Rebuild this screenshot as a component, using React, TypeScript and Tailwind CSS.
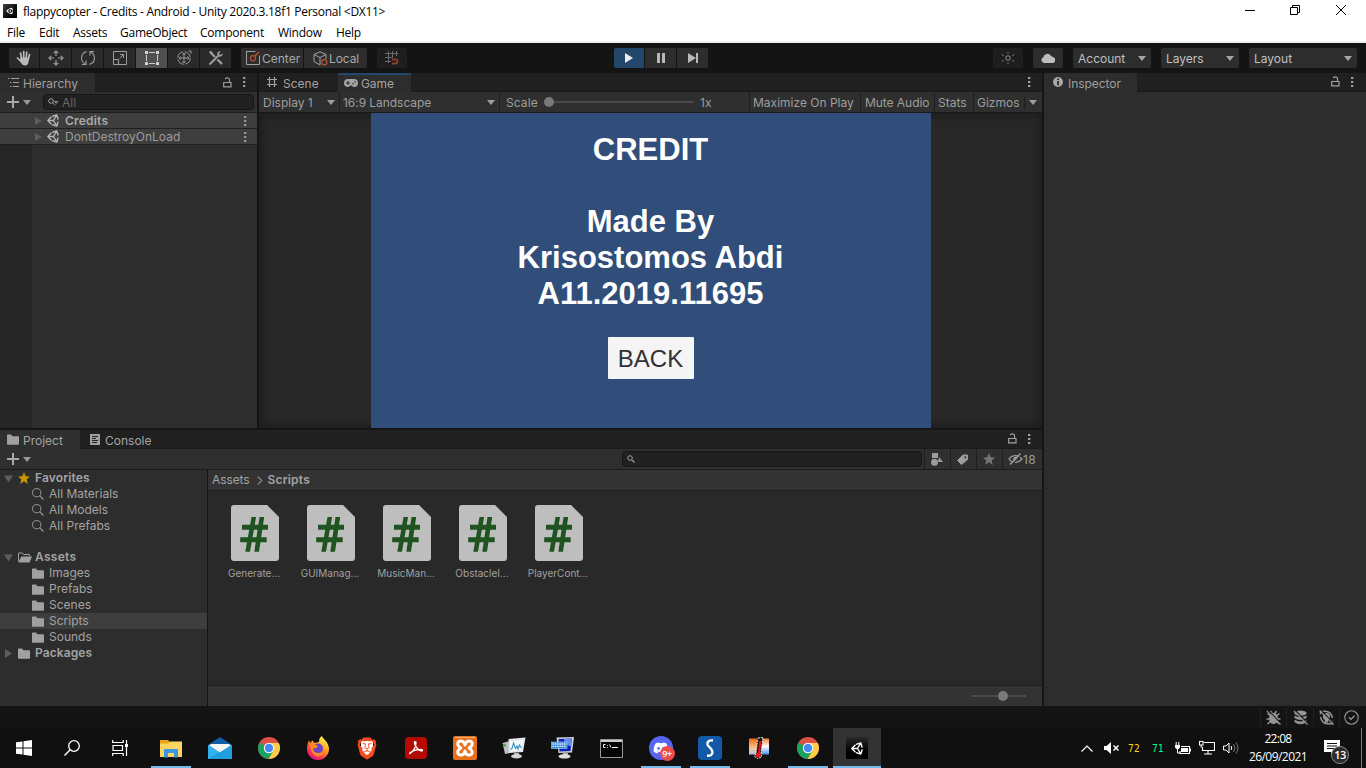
import React from "react";
import { FaUnity, FaDiscord } from "react-icons/fa";
import { SiBrave } from "react-icons/si";

type IconProps = { w: number; h: number; className?: string; children: React.ReactNode };

function Icon({ w, h, className = "", children }: IconProps) {
  return (
    <svg width={w} height={h} viewBox={`0 0 ${w} ${h}`} className={`shrink-0 ${className}`} fill="none">
      {children}
    </svg>
  );
}

function Caret({ className = "" }: { className?: string }) {
  return (
    <Icon w={8} h={5} className={className}>
      <path d="M0 0H8L4 5Z" fill="currentColor" />
    </Icon>
  );
}

function Dots({ className = "" }: { className?: string }) {
  return (
    <Icon w={3} h={12} className={className}>
      <path d="M0 1h2.300v2H0zM0 5h2.300v2H0zM0 9h2.300v2H0z" fill="currentColor" />
    </Icon>
  );
}

function Lock({ className = "" }: { className?: string }) {
  return (
    <Icon w={9} h={11} className={className}>
      <path d="M.7 5.500h7.300v4.300H.7zM6.500 5V2.600C6.500.4 2.600.3 2.200 2.200" stroke="currentColor" strokeWidth="1.200" />
    </Icon>
  );
}

function Folder({ className = "" }: { className?: string }) {
  return (
    <Icon w={12} h={11} className={className}>
      <path d="M0 1.200Q0 .5.8.5H4L5.500 2.300h5.700q.8 0 .8.8V10q0 .8-.8.8H.8Q0 10.800 0 10Z" fill="currentColor" />
    </Icon>
  );
}

function SceneLogo({ className = "" }: { className?: string }) {
  return (
    <Icon w={12} h={13} className={className}>
      <path d="M4.500 2.700.8 6.500l3.700 3.800M.8 6.500h5.700M6.500 6.500 9.800 1 5 2.400M6.500 6.500 9.800 12 5 10.600M9.800 1l1.400 4.500M9.800 12l1.400-4.500" stroke="currentColor" strokeWidth="1.400" strokeLinejoin="round" />
    </Icon>
  );
}

function Plus() {
  return (
    <Icon w={12} h={12} className="text-[#a8a8a8]">
      <path d="M6 0v12M0 6h12" stroke="currentColor" strokeWidth="2" />
    </Icon>
  );
}

const toolIcons = [
  <Icon w={16} h={16} className="text-[#b8b8b8]">
    <path d="M5.500 8.500 4.500 3M7.700 8V1.500M10.200 8l.5-6M12.300 9l1.200-4.500M5 11.500 1.500 8" stroke="currentColor" strokeWidth="1.700" strokeLinecap="round" />
    <path d="M4.600 7.500h8.600L12.500 12q-.7 3.500-3.500 3.500-2.500 0-3.500-2L3.500 10.500Z" fill="currentColor" />
  </Icon>,
  <Icon w={16} h={16}>
    <path d="M8 1v5M8 10v5M1 8h5M10 8h5M5.800 3.200 8 1l2.200 2.200M5.800 12.800 8 15l2.200-2.200M3.200 5.800 1 8l2.200 2.200M12.800 5.800 15 8l-2.200 2.200" stroke="currentColor" strokeWidth="1.200" />
  </Icon>,
  <Icon w={16} h={16}>
    <path d="M6.500 1.600C0 3.500.2 11.500 5.500 14.300M2 14.500h4v-4M9.500 14.400C16 12.500 15.800 4.500 10.500 1.700M14 1.500h-4v4" stroke="currentColor" strokeWidth="1.100" />
  </Icon>,
  <Icon w={16} h={16}>
    <path d="M1.500 1.500h13v13h-13zM1.500 9.500h5v5M7.500 8.500l4-4M8 4.500h3.500V8" stroke="currentColor" />
  </Icon>,
  <Icon w={16} h={16} className="text-[#d0d0d0]">
    <path d="M5 2.500h6M5 13.500h6M2.500 5v6M13.500 5v6" stroke="currentColor" />
    <path d="M1 1h3v3H1zM12 1h3v3h-3zM1 12h3v3H1zM12 12h3v3h-3z" fill="currentColor" />
  </Icon>,
  <Icon w={16} h={16}>
    <circle cx="8" cy="8" r="6.200" stroke="currentColor" strokeDasharray="8 1.700" />
    <path d="M8 3v10M3 8h10M6.500 4.700 8 3l1.500 1.700M6.500 11.300 8 13l1.500-1.700M4.700 6.500 3 8l1.700 1.500M11.300 6.500 13 8l-1.700 1.500M12.500 1H15v2.500" stroke="currentColor" />
  </Icon>,
  <Icon w={16} h={16}>
    <path d="m2 2 5 5M9.500 9.500l4.500 4.500" stroke="currentColor" strokeWidth="2.400" />
    <path d="M1.500 14.500 10.300 5.700" stroke="currentColor" strokeWidth="2" />
    <path d="M14.700 3.200 12.500 5 11 3.500l1.700-2.200C10 .7 8.600 3 9.400 5.200l1.400 1.500c2.300.6 4.400-1.200 3.900-3.500ZM1 1l3 .5L5 4 3.500 5Z" fill="currentColor" />
  </Icon>,
];

function DropButton({ label, className }: { label: string; className: string }) {
  return (
    <div className={`flex h-5 items-center justify-between rounded-[2px] bg-[#2d2d2d] pr-[5px] pl-[5px] text-[12px] text-[#c0c0c0] ${className}`}>
      <span className="pt-px">{label}</span>
      <Caret className="text-[#a6a6a6]" />
    </div>
  );
}

function MainToolbar() {
  return (
    <div className="flex h-[30px] items-center bg-[#141414] pl-[9px] text-[#9c9c9c]">
      <div className="flex gap-px">
        {toolIcons.map((icon, i) => (
          <div
            key={i}
            className={`flex h-5 items-center justify-center ${i === 4 ? "bg-[#505050]" : "bg-[#2a2a2a]"} ${i === 0 ? "w-[30px] rounded-l-[2px]" : "w-[31px]"}`}
          >
            {icon}
          </div>
        ))}
      </div>
      <div className="ml-[10px] flex gap-px text-[12px] text-[#a8a8a8]">
        <div className="flex h-5 w-[62px] items-center gap-[2px] rounded-l-[2px] bg-[#2d2d2d] pl-[5px]">
          <Icon w={14} h={14}>
            <path d="M5 .5H.5v13h13V9M.5 5V.5h9M13.500 10V4.500" stroke="#a0a0a0" />
            <circle cx="7" cy="7.300" r="2.600" stroke="#c1502e" strokeWidth="1.200" />
            <path d="m9 5 4-4" stroke="#c1502e" strokeWidth="1.200" />
          </Icon>
          <span className="pt-px">Center</span>
        </div>
        <div className="flex h-5 w-[63px] items-center gap-[1px] rounded-r-[2px] bg-[#2d2d2d] pl-[9px]">
          <Icon w={15} h={15}>
            <path d="M7 .8 13 3.500V8M7 .8 1 3.500v7L7 14M1 3.500l6 3 6-3M7 6.500V14" stroke="#a0a0a0" />
            <circle cx="11.300" cy="11.300" r="2.600" fill="#2d2d2d" stroke="#c1502e" strokeWidth="1.200" />
          </Icon>
          <span className="pt-px tracking-[-0.1px]">Local</span>
        </div>
      </div>
      <div className="ml-[10px] flex h-5 w-[30px] items-center justify-center rounded-[2px] bg-[#1e1e1e]">
        <Icon w={14} h={14}>
          <path d="M3.500 0v12M7.500 0v7M11.500 0v5M0 2.500h13M0 6.500h8M0 10.500h6" stroke="#6a6a6a" />
          <path d="M7 8.500h3.500a2 2 0 0 1 0 4H7" stroke="#8a4028" strokeWidth="1.800" />
        </Icon>
      </div>
      <div className="ml-[207px] flex gap-px">
        <div className="flex h-5 w-[30px] items-center justify-center rounded-l-[2px] bg-[#23466b]">
          <Icon w={8} h={10}><path d="M0 0 8 5 0 10Z" fill="#ececec" /></Icon>
        </div>
        <div className="flex h-5 w-[31px] items-center justify-center bg-[#2d2d2d]">
          <Icon w={8} h={10}><path d="M0 0h3v10H0zM5 0h3v10H5z" fill="#b8b8b8" /></Icon>
        </div>
        <div className="flex h-5 w-[31px] items-center justify-center rounded-r-[2px] bg-[#2d2d2d]">
          <Icon w={10} h={10}><path d="M0 0 8 5 0 10ZM8 0h2v10H8z" fill="#b8b8b8" /></Icon>
        </div>
      </div>
      <div className="ml-[285px] flex gap-[10px]">
        <div className="flex h-5 w-[30px] items-center justify-center rounded-[2px] bg-[#1e1e1e]">
          <Icon w={12} h={12}>
            <circle cx="6" cy="6" r="2.200" stroke="#707070" strokeWidth="1.200" />
            <path d="M5.300 0h1.400v1.500H5.300zM5.300 10.500h1.400V12H5.300zM0 2.500h1.500V4H0zM10.500 2.500H12V4h-1.500zM0 8h1.500v1.500H0zM10.500 8H12v1.500h-1.500z" fill="#707070" />
          </Icon>
        </div>
        <div className="flex h-5 w-[30px] items-center justify-center rounded-[2px] bg-[#2d2d2d]">
          <Icon w={14} h={10}>
            <path d="M3 10a3 3 0 0 1-.6-5.800A4 4 0 0 1 9.800 2.800 3.600 3.600 0 0 1 11.500 4 3 3 0 0 1 11 10Z" fill="#bdbdbd" />
          </Icon>
        </div>
        <DropButton label="Account" className="w-[78px]" />
        <DropButton label="Layers" className="w-[78px]" />
        <DropButton label="Layout" className="w-[108px]" />
      </div>
    </div>
  );
}

function SceneRow({ name, bold }: { name: string; bold?: boolean }) {
  return (
    <div className="flex h-4 items-center border-b border-[#1f1f1f] bg-[#3e3e3e] pl-[35px]">
      <Icon w={7} h={8}><path d="M0 0 7 4 0 8Z" fill="#5c5c5c" /></Icon>
      <SceneLogo className="ml-[5px] text-[#b5b5b5]" />
      <span className={`ml-[6px] flex-1 text-[12px] leading-4 ${bold ? "font-semibold tracking-[0.2px] text-[#a8a8a8]" : "text-[#9c9c9c]"}`}>{name}</span>
      <Dots className="mr-[10px] text-[#999]" />
    </div>
  );
}

function Hierarchy() {
  return (
    <div className="flex w-[257px] flex-col bg-[#2d2d2d]">
      <div className="flex h-[19px] items-center justify-between border-b border-[#1a1a1a] bg-[#202020]">
        <div className="flex h-[19px] w-[95px] items-center rounded-tr-[2px] bg-[#2d2d2d] pl-[8px] text-[12px] text-[#9f9f9f]">
          <Icon w={11} h={9}>
            <path d="M0 .5h1.500M3 .5h8M2 4.500h1.500M5 4.500h6M2 8.500h1.500M5 8.500h6" stroke="currentColor" />
          </Icon>
          <span className="ml-[4px] pt-[3px]">Hierarchy</span>
        </div>
        <div className="flex items-center gap-[11px] pr-[11px] text-[#9c9c9c]">
          <Lock /><Dots />
        </div>
      </div>
      <div className="flex h-[21px] items-center border-b border-[#1c1c1c] bg-[#2f2f2f] pl-[7px]">
        <Plus />
        <Caret className="ml-[4px] text-[#999]" />
        <div className="ml-[12px] flex h-4 w-[211px] items-center rounded-[4px] border border-[#161616] bg-[#212121] pl-[4px]">
          <Icon w={10} h={8}>
            <circle cx="3" cy="3" r="2.300" stroke="#a0a0a0" />
            <path d="m4.800 4.800 2.500 2.500M6.500 3.500h3.500L8.300 5.500Z" stroke="#a0a0a0" strokeWidth=".9" />
          </Icon>
          <span className="ml-[4px] pt-px text-[12px] leading-none text-[#666]">All</span>
        </div>
      </div>
      <SceneRow name="Credits" bold />
      <SceneRow name="DontDestroyOnLoad" />
      <div className="w-8 flex-1 bg-[#262626]" />
    </div>
  );
}

function GameView() {
  return (
    <div className="ml-[2px] flex w-[783px] flex-col">
      <div className="flex h-[19px] items-center border-b border-[#1a1a1a] bg-[#202020] text-[12px] text-[#a3a3a3]">
        <div className="flex h-full w-[79px] items-center pl-[8px]">
          <Icon w={10} h={10}><path d="M2.500 0v10M7.500 0v10M0 2.500h10M0 7.500h10" stroke="currentColor" strokeWidth="1.200" /></Icon>
          <span className="ml-[6px] pt-[3px]">Scene</span>
        </div>
        <div className="flex h-[19px] w-[73px] items-center border-t-2 border-[#23466b] bg-[#2d2d2d] pl-[6px]">
          <Icon w={14} h={8}>
            <path d="M4 0h6a4 4 0 0 1 0 8C8.500 8 8.500 6.500 7 6.500S5.500 8 4 8A4 4 0 0 1 4 0Z" fill="currentColor" />
            <path d="M4 2v4M2 4h4" stroke="#2d2d2d" />
            <circle cx="9" cy="4.800" r=".8" fill="#2d2d2d" /><circle cx="11" cy="3" r=".8" fill="#2d2d2d" />
          </Icon>
          <span className="ml-[3px] pt-px tracking-[-0.1px]">Game</span>
        </div>
        <Dots className="mr-[11px] ml-auto" />
      </div>
      <div className="flex h-[21px] items-stretch border-b border-[#191919] bg-[#2f2f2f] pt-px text-[12px] leading-5 whitespace-nowrap text-[#9e9e9e]">
        <div className="-mt-px flex w-[81px] items-center justify-between border-r border-[#1e1e1e] pr-[4px] pl-[4px]"><span className="pt-px">Display 1</span><Caret /></div>
        <div className="-mt-px flex w-[160px] items-center justify-between border-r border-[#1e1e1e] pr-[4px] pl-[3px]"><span className="pt-px tracking-[-0.05px]">16:9 Landscape</span><Caret /></div>
        <div className="-mt-px flex w-[250px] items-center border-r border-[#1e1e1e] pl-[6px]">
          <span className="w-[38px] pt-px tracking-[0.1px]">Scale</span>
          <span className="size-[10px] rounded-full bg-[#7a7a7a]" />
          <span className="h-[2px] w-[140px] bg-[#4a4a4a]" />
          <span className="ml-[6px] pt-px">1x</span>
        </div>
        <div className="w-[111px] border-r border-[#1e1e1e] pl-[3px]">Maximize On Play</div>
        <div className="w-[74px] border-r border-[#1e1e1e] pl-[4px] tracking-[-0.05px]">Mute Audio</div>
        <div className="w-[39px] border-r border-[#1e1e1e] pl-[3px]">Stats</div>
        <div className="flex flex-1 items-center pl-[3px]">
          <span className="w-[47px]">Gizmos</span>
          <span className="h-3 w-px bg-[#1e1e1e]" />
          <Caret className="ml-[4px]" />
        </div>
      </div>
      <div className="flex flex-1 bg-[#282828] pl-[112px] shadow-[inset_0_0_9px_3px_#1d1d1d]">
        <div className="flex w-[560px] flex-col items-center bg-[#314d79] pt-[19px] font-['Liberation_Sans',sans-serif]">
          <div className="pr-px text-center text-[31px] leading-9 font-bold text-white">
            CREDIT<br /><br />Made By<br />Krisostomos Abdi<br />A11.2019.11695
          </div>
          <div className="mt-[25px] flex h-[42px] w-[86px] items-center justify-center rounded-[1px] bg-[#f5f5f5] pt-[2px] pr-px text-[24px] text-[#323232]">BACK</div>
        </div>
      </div>
    </div>
  );
}

function TreeLabel({ children, className = "" }: { children: React.ReactNode; className?: string }) {
  return <span className={`text-[12px] leading-4 text-[#a3a3a3] ${className}`}>{children}</span>;
}

function Fold({ open }: { open?: boolean }) {
  return (
    <Icon w={9} h={9}>
      <path d={open ? "M0 1.500H9L4.500 8.500Z" : "M1 0 8 4.500 1 9Z"} fill="#5c5c5c" />
    </Icon>
  );
}

function ProjectTree() {
  return (
    <div className="flex w-[207px] flex-col bg-[#2d2d2d]">
      <div className="flex h-4 items-center pl-[4px]">
        <Fold open />
        <Icon w={12} h={12} className="ml-[5px]"><path d="m6 0 1.700 4.200 4.300.3-3.300 2.900L9.800 12 6 9.300 2.200 12l1.100-4.600L0 4.500l4.300-.3Z" fill="#c99700" /></Icon>
        <TreeLabel className="ml-[5px] font-semibold tracking-[0.15px]">Favorites</TreeLabel>
      </div>
      {["All Materials", "All Models", "All Prefabs"].map((n) => (
        <div key={n} className="flex h-4 items-center pl-[32px]">
          <Icon w={12} h={12}>
            <circle cx="4.700" cy="4.700" r="4.100" stroke="#9a9a9a" /><path d="m7.800 7.800 3.700 3.700" stroke="#9a9a9a" strokeWidth="1.200" />
          </Icon>
          <TreeLabel className="ml-[5px]">{n}</TreeLabel>
        </div>
      ))}
      <div className="mt-[15px] flex h-4 items-center pl-[4px]">
        <Fold open />
        <Icon w={14} h={11} className="ml-[5px] text-[#a0a0a0]">
          <path d="M.5 9.500V1h4l1 1.500h6V4" stroke="currentColor" />
          <path d="M.5 10.500 3.200 4.500H14L11.500 10.500Z" fill="currentColor" />
        </Icon>
        <TreeLabel className="ml-[3px] font-semibold tracking-[0.3px]">Assets</TreeLabel>
      </div>
      {["Images", "Prefabs", "Scenes", "Scripts", "Sounds"].map((n) => (
        <div key={n} className={`flex h-4 items-center pl-[32px] ${n === "Scripts" ? "bg-[#3e3e3e]" : ""}`}>
          <Folder className="text-[#a0a0a0]" />
          <TreeLabel className="ml-[5px]">{n}</TreeLabel>
        </div>
      ))}
      <div className="flex h-4 items-center pl-[4px]">
        <Fold />
        <Folder className="ml-[5px] text-[#a0a0a0]" />
        <TreeLabel className="ml-[5px] font-semibold tracking-[0.1px]">Packages</TreeLabel>
      </div>
    </div>
  );
}

function ScriptFile({ name }: { name: string }) {
  return (
    <div className="flex w-[76px] flex-col items-center">
      <Icon w={48} h={56}>
        <path d="M3 0H36L48 12V53q0 3-3 3H3q-3 0-3-3V3Q0 0 3 0Z" fill="#bebebe" />
        <path d="M20.500 12h4.600L19 46.700h-4.700ZM28.500 12h4.700L28 46.700h-4.700ZM11 19.800h26v5H11ZM9.200 32.200h26.500v5H9.200Z" fill="#1f5420" />
      </Icon>
      <span className="mt-[6px] pr-[2px] text-[10px] leading-[13px] text-[#a0a0a0]">{name}</span>
    </div>
  );
}

function Project() {
  return (
    <div className="mt-[2px] flex h-[276px] w-[1042px] flex-col">
      <div className="flex h-[19px] items-center border-b border-[#1c1c1c] bg-[#202020] text-[12px] text-[#a3a3a3]">
        <div className="flex h-[19px] w-[80px] items-center rounded-tr-[2px] bg-[#2f2f2f] pl-[7px]">
          <Folder className="text-[#a0a0a0]" />
          <span className="ml-[4px] pt-[3px]">Project</span>
        </div>
        <div className="flex items-center pl-[10px]">
          <Icon w={10} h={11}>
            <path d="M0 0h10v11H0Z" fill="#a0a0a0" /><path d="M2 2.500h6M2 4.500h4M2 6.500h6M2 8.500h5" stroke="#202020" />
          </Icon>
          <span className="ml-[5px] pt-[3px]">Console</span>
        </div>
        <div className="ml-auto flex gap-[11px] pr-[11px]"><Lock /><Dots /></div>
      </div>
      <div className="flex h-[21px] items-center border-b border-[#1c1c1c] bg-[#2f2f2f] pl-[7px] text-[#9c9c9c]">
        <Plus />
        <Caret className="ml-[4px] text-[#999]" />
        <div className="ml-auto flex h-4 w-[300px] items-center rounded-[4px] border border-[#161616] bg-[#212121] pl-[4px]">
          <Icon w={8} h={8}><circle cx="3" cy="3" r="2.300" stroke="#a0a0a0" /><path d="m4.800 4.800 2.700 2.700" stroke="#a0a0a0" strokeWidth="1.200" /></Icon>
        </div>
        <div className="ml-[2px] flex h-5 w-[26px] items-center justify-center border-l border-[#1e1e1e] pr-[2px]">
          <Icon w={13} h={13}><path d="M2 0h6v5H2ZM9 4l4 5H8Z" fill="currentColor" /><circle cx="4.500" cy="9.300" r="3.500" fill="currentColor" /></Icon>
        </div>
        <div className="flex h-5 w-[26px] items-center justify-center border-l border-[#1e1e1e] pr-[3px]">
          <Icon w={11} h={11}><path d="M6 1h4.500v4.500L4.500 10.500 .5 6.500Z" fill="currentColor" stroke="currentColor" strokeLinejoin="round" /><circle cx="8.300" cy="3.300" r="1" fill="#2f2f2f" /></Icon>
        </div>
        <div className="flex h-5 w-[26px] items-center justify-center border-l border-[#1e1e1e] pr-px">
          <Icon w={12} h={12}><path d="m6 0 1.700 4.200 4.300.3-3.300 2.900L9.800 12 6 9.300 2.200 12l1.100-4.600L0 4.500l4.300-.3Z" fill="#747474" /></Icon>
        </div>
        <div className="flex h-5 w-[40px] items-center border-l border-[#1e1e1e] pl-[5px]">
          <Icon w={15} h={12}>
            <path d="M1 6C4 1.500 10.500 1.500 14 6 10.500 10.500 4 10.500 1 6Z" stroke="currentColor" strokeWidth="1.300" />
            <circle cx="7.500" cy="6" r="2.300" fill="currentColor" /><path d="m3.200 12.500 10.500-11" stroke="#2f2f2f" strokeWidth="1.300" /><path d="M2 11.500 12.500.5" stroke="currentColor" strokeWidth="1.400" />
          </Icon>
          <span className="pt-px text-[12px] tracking-[0.3px]">18</span>
        </div>
      </div>
      <div className="flex flex-1">
        <ProjectTree />
        <div className="ml-px flex flex-1 flex-col bg-[#292929]">
          <div className="flex h-[21px] items-center border-b border-[#1f1f1f] bg-[#333] pl-[4px]">
            <TreeLabel className="tracking-[-0.1px] text-[#909090]">Assets</TreeLabel>
            <Icon w={6} h={9} className="ml-[7px]"><path d="m.7.5 4 4-4 4" stroke="#808080" strokeWidth="1.300" /></Icon>
            <TreeLabel className="ml-[5px] font-semibold tracking-[0.2px]">Scripts</TreeLabel>
          </div>
          <div className="flex flex-1 pt-[14px] pl-[9px]">
            {["Generate...", "GUIManag...", "MusicMan...", "ObstacleI...", "PlayerCont..."].map((n) => <ScriptFile key={n} name={n} />)}
          </div>
          <div className="flex h-[21px] items-center justify-end border-t border-[#1f1f1f] bg-[#333] pr-[16px]">
            <span className="h-[2px] w-[27px] bg-[#4a4a4a]" /><span className="size-[10px] rounded-full bg-[#7a7a7a]" /><span className="h-[2px] w-[18px] bg-[#4a4a4a]" />
          </div>
        </div>
      </div>
    </div>
  );
}

function Inspector() {
  return (
    <div className="ml-[2px] flex flex-1 flex-col bg-[#2d2d2d]">
      <div className="flex h-[19px] items-center border-b border-[#1a1a1a] bg-[#202020] text-[12px] text-[#9f9f9f]">
        <div className="flex h-[19px] w-[93px] items-center rounded-t-[2px] bg-[#2d2d2d] pl-[9px]">
          <Icon w={10} h={10}><circle cx="5" cy="5" r="5" fill="#a8a8a8" /><path d="M4.200 1.500h1.700v1.500H4.200ZM4.200 4h1.700v4.300H4.200Z" fill="#222" /></Icon>
          <span className="ml-[5px] pt-[3px] tracking-[-0.05px]">Inspector</span>
        </div>
        <div className="ml-auto flex gap-[11px] pr-[12px]"><Lock /><Dots /></div>
      </div>
    </div>
  );
}

function Slash() {
  return (
    <>
      <path d="m2 0 13 13.500" stroke="#141414" strokeWidth="1.100" />
      <path d="m.8.8 13.700 13.700" stroke="currentColor" strokeWidth="1.200" />
    </>
  );
}

function StatusBar() {
  return (
    <div className="flex h-[22px] items-center justify-end bg-[#141414] pr-[7px] text-[#959595]">
      <div className="flex h-5 w-[26px] items-center justify-center border-l border-[#202020]">
        <Icon w={15} h={15}>
          <ellipse cx="7.500" cy="8.500" rx="4.500" ry="5.500" fill="currentColor" />
          <path d="M4.500 1 6.500 4M10.500 1 8.500 4M1.500 3.500l4 3M13.500 3.500l-4 3M.5 9H14.500M1.500 14 5 11M13.500 14 10 11" stroke="currentColor" strokeWidth="1.500" />
          <Slash />
        </Icon>
      </div>
      <div className="flex h-5 w-[27px] items-center justify-center border-l border-[#202020]">
        <Icon w={15} h={15}>
          <ellipse cx="7.500" cy="3.200" rx="6" ry="2.700" fill="currentColor" />
          <path d="M1.500 5.500q6 3.500 12 0v2.500q-6 4-12 0ZM1.500 9.800q6 3.500 12 0v2.500q-6 4-12 0Z" fill="currentColor" />
          <Slash />
        </Icon>
      </div>
      <div className="flex h-5 w-[26px] items-center justify-center border-l border-[#202020]">
        <Icon w={15} h={15}>
          <circle cx="7.500" cy="6.500" r="3.600" fill="currentColor" /><path d="M5.800 9h3.400v3.500H5.800Z" fill="currentColor" />
          <path d="M4.500 1.300Q12 .5 13.500 8M10.500 13.700Q3 14.500 1.500 7M10 13.700h3.500v-3M5 1.300H1.500v3" stroke="currentColor" strokeWidth="1.400" />
          <Slash />
        </Icon>
      </div>
      <div className="flex h-5 w-[20px] items-center justify-end border-l border-[#202020]">
        <Icon w={15} h={15}><circle cx="7.500" cy="7.500" r="6.700" stroke="currentColor" strokeWidth="1.100" /><path d="m4.800 7.300 2.200 2 3.500-3.500" stroke="currentColor" strokeWidth="1.300" /></Icon>
      </div>
    </div>
  );
}

function Chrome() {
  return (
    <Icon w={22} h={22}>
      <circle cx="11" cy="11" r="11" fill="#dd5144" />
      <path d="M11 11 1.500 5.500A11 11 0 0 0 10.500 22L16 13.500Z" fill="#1aa260" />
      <path d="M11 11V6h9.800A11 11 0 0 1 10.500 22l5.500-9Z" fill="#ffcd46" />
      <circle cx="11" cy="11" r="5.200" fill="#fff" /><circle cx="11" cy="11" r="4.200" fill="#4587f3" />
    </Icon>
  );
}

function Monitor({ variant }: { variant: "graph" | "keys" }) {
  return variant === "graph" ? (
    <Icon w={24} h={22}>
      <path d="M.5 6 8 4v12L3 17Z" fill="#b9c0bd" /><path d="M1 7h3v2.500H1Z" fill="#48a848" />
      <path d="m6.500 2 17-1.500-2.500 14.500-14 1Z" fill="#e4e7e8" /><path d="m8 4 13.500-1.300-2 10.800L8.300 14.300Z" fill="#f3fafc" />
      <path d="m8.500 12.500 1.500-1L11.500 6l2 5.500L15 9l1 3 1.500-4 2 3" stroke="#3a8fc4" strokeWidth="1.100" /><path d="M12 16h5l.5 2.500H12Z" fill="#b4b4b4" /><ellipse cx="14.500" cy="19.300" rx="5.500" ry="2.200" fill="#d5d5d5" />
    </Icon>
  ) : (
    <Icon w={24} h={22}>
      <path d="m5.500.5 17.500-.5-2 15.500L7.500 16Z" fill="#d0d4da" /><path d="m7.500 2 13.500-.5-1.500 12.500-11 .5Z" fill="#0f22b8" /><path d="m13 2 8-.5-1 8q-7-2-7-7.500Z" fill="#6a8cf0" />
      <path d="M0 5h16v6.500H0Z" fill="#3d8fdc" stroke="#a9d3fa" strokeWidth=".6" /><path d="M1.500 7h13M1.500 9.300h13" stroke="#e0f0ff" strokeWidth="1.300" strokeDasharray="1.500 .8" />
      <path d="M12 16h5v2.500h-5Z" fill="#aaa" /><ellipse cx="13.500" cy="19.300" rx="6" ry="2.300" fill="#ddd" />
    </Icon>
  );
}

const pinned: { icon: React.ReactNode; active?: boolean }[] = [
  {
    active: true,
    icon: (
      <Icon w={22} h={19}>
        <path d="M0 1h8l2 2h12v15H0Z" fill="#e8a317" /><path d="M0 4.500h8.500l1.500-2H22V18H0Z" fill="#fcd462" />
        <path d="M4 18.500V11q0-1 1-1h12q1 0 1 1v7.500h-4V14H8v4.500Z" fill="#3c97dd" />
      </Icon>
    ),
  },
  {
    icon: (
      <Icon w={24} h={22}>
        <path d="M0 8 12 0l12 8v3H0Z" fill="#0f5fa8" /><path d="M1 8.500 3 7h18l2 1.500L12 16Z" fill="#f5f5f5" />
        <path d="M0 8v14h24V8L12 15.500Z" fill="#30b3ec" /><path d="M0 22 24 8v14Z" fill="#1d96d9" opacity=".7" />
      </Icon>
    ),
  },
  { icon: <Chrome /> },
  {
    icon: (
      <Icon w={24} h={24}>
        <defs><linearGradient id="fx" x1="18" y1="2" x2="5" y2="22" gradientUnits="userSpaceOnUse"><stop stopColor="#fff44f" /><stop offset=".4" stopColor="#ff9a1f" /><stop offset=".75" stopColor="#ff3750" /><stop offset="1" stopColor="#e3168c" /></linearGradient></defs>
        <path d="M1 13C1 9 2 8 2.500 4.500L5 7l1-3 2.500 3L13 6c0-3 1-5 3-6 .5 3 7 6 7 13a11 11 0 0 1-22 0Z" fill="url(#fx)" />
        <circle cx="12" cy="12.500" r="5" fill="#6b45c6" /><path d="M4 8q5-1 8 2.500-2 2.500-5 1.500 0 5 5.500 5 5 0 6.500-5 0 8-7 8.500Q5 20 4 8Z" fill="#ff8a25" />
      </Icon>
    ),
  },
  {
    icon: (
      <span className="relative flex h-[23px] w-[22px] items-center justify-center">
        <span className="absolute h-[15px] w-[12px] bg-white" />
        <SiBrave size={23} className="relative text-[#fb4a22]" />
      </span>
    ),
  },
  {
    icon: (
      <Icon w={22} h={22}>
        <rect width="22" height="22" rx="3.500" fill="#b30b00" />
        <path d="M5 16.500C8 15 11 10 11 5.800c0-1.800-1.800-1.600-1.500.3C10 9.500 13 13 16.500 14c1.500.3 1.300-1.800-.8-1.600C12 12.500 8.500 13.500 6 15c-1.500 1-1.800 2-1 1.500Z" stroke="#fff" strokeWidth="1.300" />
      </Icon>
    ),
  },
  {
    icon: (
      <Icon w={24} h={24}>
        <rect width="24" height="24" rx="2" fill="#e8711e" />
        <path d="M2 1.500h20" stroke="#f9b27c" />
        <path d="M12 9C11 3.500 4.700 4 4.700 8c0 2 1.800 3 3.300 4-1.500 1-3.300 2-3.300 4 0 4 6.300 4.500 7.300-1 1 5.500 7.300 5 7.300 1 0-2-1.800-3-3.300-4 1.500-1 3.300-2 3.300-4 0-4-6.300-4.500-7.300 1Z" stroke="#fff" strokeWidth="3" strokeLinejoin="round" />
      </Icon>
    ),
  },
  { icon: <Monitor variant="graph" /> },
  { icon: <Monitor variant="keys" /> },
  {
    icon: (
      <Icon w={23} h={19}>
        <path d="M.5.5h22v18H.5Z" fill="#050505" stroke="#9a9a9a" /><path d="M1 1h21v2H1Z" fill="#c9ccd0" />
        <path d="M5.500 5.500H3.500v3h2M7.500 6v.8M7.500 8v.8M9.500 5.500l1.500 3M12 8.500h6" stroke="#eee" />
      </Icon>
    ),
  },
  {
    active: true,
    icon: (
      <span className="relative flex size-6 items-center justify-center rounded-full bg-[#5865f2]">
        <FaDiscord size={16} className="text-white" />
        <span className="absolute top-[10px] left-[11px] flex size-[15px] items-center justify-center rounded-full bg-[#ed4c4c] font-['Open_Sans',sans-serif] text-[9px] font-semibold tracking-[-0.3px] text-white">9+</span>
      </span>
    ),
  },
  {
    active: true,
    icon: (
      <Icon w={24} h={24}>
        <rect width="24" height="24" rx="4" fill="#1259a8" />
        <path d="M15 4.500C11 4 9 5.500 9.500 8.500 10 11 14.500 12.500 14.500 16c0 2.500-2 4-5.500 3.800" stroke="#fff" strokeWidth="2.400" />
      </Icon>
    ),
  },
  {
    icon: (
      <Icon w={20} h={22}>
        <defs>
          <linearGradient id="hot" x2="0" y2="1"><stop stopColor="#ef6a12" /><stop offset=".6" stopColor="#fbc48d" /><stop offset="1" stopColor="#a9c8f5" /></linearGradient>
          <linearGradient id="cold" x2="0" y2="1"><stop stopColor="#f08030" /><stop offset=".5" stopColor="#fff" /><stop offset="1" stopColor="#4c8ff0" /></linearGradient>
        </defs>
        <path d="M0 1.500h8v16H0Z" fill="url(#hot)" /><path d="M12 1.500h8v16h-8Z" fill="url(#cold)" />
        <path d="m9 1 5-.5-2 15.500.5 4-4 1.500-3-2L7 16Z" fill="#101010" stroke="#dde9d6" strokeDasharray="2 .8" /><path d="m11.300 4-1.500 14" stroke="#e31414" strokeWidth="2.200" /><circle cx="9.300" cy="18" r="2.500" fill="#f01818" />
      </Icon>
    ),
  },
  { active: true, icon: <Chrome /> },
];

function Taskbar() {
  return (
    <div className="flex h-10 items-stretch bg-[#101010] font-['Open_Sans',sans-serif] text-white">
      <div className="flex w-12 items-center justify-center">
        <Icon w={16} h={16}><path d="M0 2.300 6.500 1.400V7.500H0ZM7.500 1.200 16 0v7.500H7.500ZM0 8.500h6.500v6.100L0 13.700ZM7.500 8.500H16V16l-8.500-1.200Z" fill="#fff" /></Icon>
      </div>
      <div className="flex w-12 items-center justify-center">
        <Icon w={16} h={16}><circle cx="10" cy="6" r="5.300" stroke="#fff" strokeWidth="1.300" /><path d="M6.200 9.800.5 15.500" stroke="#fff" strokeWidth="1.400" /></Icon>
      </div>
      <div className="flex w-[51px] items-center pl-[16px]">
        <Icon w={16} h={16}><path d="M.7 0v2.500h10.500V0M.7 16v-2.500h10.500V16M1 5.500h9.500v5H1ZM14.500 0v4M14.500 7v9" stroke="#fff" strokeWidth="1.200" /><path d="M13 4h3v3h-3Z" fill="#fff" /></Icon>
      </div>
      {pinned.map((p, i) => (
        <div key={i} className="relative flex w-[49px] items-center justify-center pr-[2px]">
          {p.icon}
          {p.active && <span className="absolute bottom-0 left-[4px] h-[2px] w-10 bg-[#76b9ed]" />}
        </div>
      ))}
      <div className="flex w-12 items-center justify-center border-b-2 border-[#76b9ed] bg-[#333]">
        <span className="mt-[2px] flex size-[22px] items-center justify-center bg-gradient-to-b from-[#2a2a2a] to-black"><SceneLogo /></span>
      </div>
      <div className="flex flex-1 items-center pl-[200px]">
        <Icon w={12} h={7}><path d="m.5 6.500 5.500-5.500 5.500 5.500" stroke="#fff" strokeWidth="1.200" /></Icon>
        <Icon w={15} h={12} className="ml-[11px]"><path d="M0 4h2.500L7 0v12L2.500 8H0Z" fill="#fff" /><path d="m9.500 3.500 5 5M14.500 3.500l-5 5" stroke="#fff" strokeWidth="1.500" /></Icon>
        <span className="ml-[9px] w-[24px] font-['DejaVu_Sans_Condensed','DejaVu_Sans',sans-serif] text-[10px] tracking-[0.2px] text-[#ffd800]">72</span>
        <span className="w-[22px] font-['DejaVu_Sans_Condensed','DejaVu_Sans',sans-serif] text-[10px] tracking-[0.2px] text-[#00ff90]">71</span>
        <Icon w={16} h={13} className="ml-px">
          <path d="M6 4.500h8.500v7H5V9" stroke="#fff" strokeWidth="1.100" /><path d="M6 6h7v4H6ZM15 6.500h1v3h-1ZM0 3h5v2.500L3.500 7h-2L0 5.500Z" fill="#fff" /><path d="M1.200 0v3M3.800 0v3M2.500 7v4h3" stroke="#fff" />
        </Icon>
        <Icon w={16} h={14} className="ml-[8px]"><path d="M5 1.500h10.500v8H3.500V6M9 9.500v3M5 13h8M.5.500h3.500v3.500H.5ZM2.200 4v2.500" stroke="#fff" strokeWidth="1.100" /></Icon>
        <Icon w={16} h={14} className="ml-[8px]"><path d="M.5 5H3l3-3v10L3 9H.5Z" stroke="#fff" /><path d="M8 5q1.500 2 0 4" stroke="#fff" /><path d="M10.500 3q3 4 0 8M13 1.500q4 5.500 0 11" stroke="#777" /></Icon>
        <div className="ml-[8px] w-[62px] text-center text-[12px] leading-[18px] whitespace-nowrap">
          <div className="tracking-[-0.7px]">22:08</div>
          <div className="tracking-[-0.55px]">26/09/2021</div>
        </div>
        <div className="relative ml-[15px]">
          <Icon w={17} h={16}><path d="M0 0h16v12H10l-3 3.500V12H0Z" fill="#fff" /><path d="M3 3.500h10M3 6h10M3 8.500h10" stroke="#101010" /></Icon>
          <span className="absolute top-[6px] left-[7px] flex size-[18px] items-center justify-center rounded-full border border-[#888] bg-[#2b2b2b] text-[11px] font-semibold tracking-[-0.6px]">13</span>
        </div>
        <span className="mr-[4px] ml-auto h-10 w-px bg-[#777]" />
      </div>
    </div>
  );
}

export default function App() {
  return (
    <div className="flex h-[768px] w-[1366px] flex-col overflow-hidden bg-[#151515] font-[Inter,sans-serif]">
      <div className="flex h-[22px] items-center bg-white pl-[3px] font-['Open_Sans',sans-serif] text-[12px] text-black">
        <span className="flex size-[14px] items-center justify-center bg-gradient-to-br from-[#444] to-black"><FaUnity size={8} className="text-white" /></span>
        <span className="ml-[6px] pt-[2px] tracking-[-0.28px]">flappycopter - Credits - Android - Unity 2020.3.18f1 Personal &lt;DX11&gt;</span>
        <div className="ml-auto flex items-center gap-[35px] pr-[20px] pb-[2px]">
          <Icon w={10} h={10} className="mr-px"><path d="M0 5.500h10" stroke="#000" /></Icon>
          <Icon w={10} h={10} className="-ml-px mr-px"><path d="M.5 2.500h7v7h-7ZM2.500 2.500v-2h7v7h-2" stroke="#000" /></Icon>
          <Icon w={10} h={10}><path d="m0 0 10 10M10 0 0 10" stroke="#000" /></Icon>
        </div>
      </div>
      <div className="flex h-[21px] items-center border-b-2 border-[#f0f0f0] bg-white pt-[2px] pl-[7px] font-['Open_Sans',sans-serif] text-[12px] tracking-[-0.25px] text-black">
        <span className="w-[32px]">File</span>
        <span className="w-[34px]">Edit</span>
        <span className="w-[47px]">Assets</span>
        <span className="w-[80px]">GameObject</span>
        <span className="w-[78px]">Component</span>
        <span className="w-[58px]">Window</span>
        <span>Help</span>
      </div>
      <MainToolbar />
      <div className="flex h-[633px]">
        <div className="flex w-[1042px] flex-col">
          <div className="flex h-[355px]">
            <Hierarchy />
            <GameView />
          </div>
          <Project />
        </div>
        <Inspector />
      </div>
      <StatusBar />
      <Taskbar />
    </div>
  );
}
